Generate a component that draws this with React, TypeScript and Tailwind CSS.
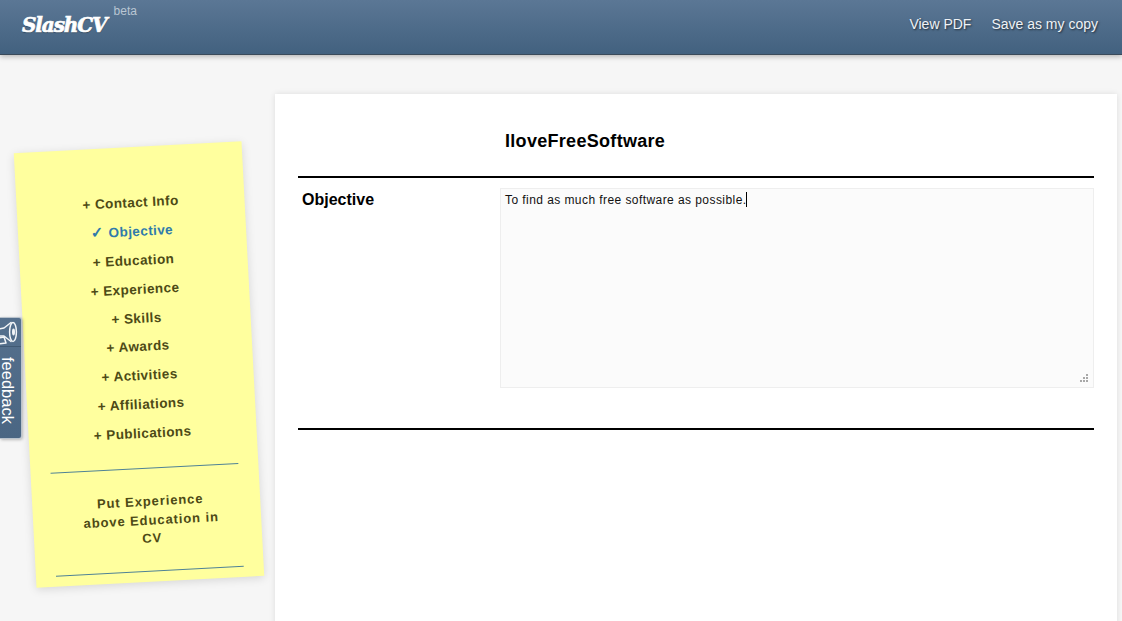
const items = ["Contact Info", "Objective", "Education", "Experience", "Skills", "Awards", "Activities", "Affiliations", "Publications"];

function Megaphone() {
  return (
    <svg width="20" height="28" viewBox="0 0 20 28" fill="none" stroke="#f2f5f8" strokeWidth="1.5" strokeLinejoin="round" strokeLinecap="round" className="shrink-0">
      <path d="M-1 11 L4 10 L11 4.5" />
      <path d="M-1 18 L4 18 L11 23.5" />
      <ellipse cx="13" cy="14" rx="3.4" ry="9.5" />
      <ellipse cx="13.5" cy="14" rx="1.5" ry="3.4" fill="#f2f5f8" stroke="none" />
      <path d="M-1 20 L4 19 L6 25 L-1 26" />
    </svg>
  );
}

function Grip() {
  const dots = [[9, 1], [6, 4], [9, 4], [3, 7], [6, 7], [9, 7]];
  return (
    <svg width="11" height="9" viewBox="0 0 11 9" className="absolute right-[5px] bottom-[5px]">
      {dots.map(([x, y]) => (
        <rect key={`${x}-${y}`} x={x} y={y} width="2" height="2" fill="#a8a8a8" />
      ))}
    </svg>
  );
}

export default function App() {
  return (
    <div className="relative h-screen overflow-hidden bg-[#f6f6f6] font-['Liberation_Sans',Arial,sans-serif]">
      <header className="relative z-10 flex h-[55px] items-start justify-between border-b border-b-[#3a4a5a] bg-gradient-to-b from-[#5b7795] to-[#42617f] shadow-[0_2px_5px_rgba(0,0,0,0.25)]">
        <div className="flex items-start pl-[22px]">
          <span className="mt-[11px] font-['DejaVu_Serif',serif] text-[20px] leading-[28px] font-bold tracking-[-1.1px] text-white italic [-webkit-text-stroke:0.7px_white] [text-shadow:0_1px_1px_rgba(0,0,0,0.4)]">SlashCV</span>
          <span className="mt-[4px] ml-[7px] text-[12px] leading-[15px] text-[#b9c6d3]">beta</span>
        </div>
        <nav className="flex gap-5 pt-[16px] pr-[24px] text-[14px] leading-[17px] text-[#eef2f6] [text-shadow:1px_1px_2px_rgba(0,0,0,0.6)]">
          <a>View PDF</a>
          <a>Save as my copy</a>
        </nav>
      </header>

      <div className="absolute top-[317px] left-0 z-20 flex h-[122px] w-[22px] flex-col overflow-hidden rounded-r-[3px] border border-l-0 border-[#b8c2cc] bg-gradient-to-b from-[#55708d] to-[#4a6683] shadow-[1px_1px_3px_rgba(0,0,0,0.25)]">
        <div className="flex h-[29px] shrink-0 overflow-hidden border-b border-b-[#415a74]">
          <Megaphone />
        </div>
        <div className="flex flex-1 justify-start pt-[10px]">
          <span className="text-[16.5px] leading-[15px] text-white [writing-mode:vertical-rl]">feedback</span>
        </div>
      </div>

      <main className="flex">
        <aside className="w-[275px] shrink-0 pt-[92px] pl-[25px]">
          <div className="h-[435px] w-[228px] -rotate-3 bg-[#ffff9e] pt-[42px] text-center text-[13.5px] font-bold tracking-[0.42px] text-[#4d4a16] shadow-[0_2px_10px_rgba(0,0,0,0.13)]">
            <ul>
              {items.map((item) => (
                <li key={item} className={item === "Objective" ? "h-[28.9px] leading-[28.9px] text-[#2f7bab]" : "h-[28.9px] leading-[28.9px]"}>
                  {item === "Objective" ? <span className="text-[15px] leading-none">✓</span> : "+"} {item}
                </li>
              ))}
            </ul>
            <div className="mx-auto mt-[19px] h-px w-[188px] bg-[#4f8296]" />
            <p className="mx-auto mt-[24px] w-[158px] pl-[8px] text-[13px] leading-[18.5px] tracking-[0.9px]">Put Experience above Education in CV</p>
            <div className="mx-auto mt-[22px] h-px w-[188px] bg-[#4f8296]" />
          </div>
        </aside>

        <section className="mt-[39px] h-[600px] w-[842px] bg-white px-[23px] pt-[35px] shadow-[0_0_6px_rgba(0,0,0,0.1)]">
          <h1 className="pl-[207px] text-[18px] leading-[24px] font-bold tracking-[0.3px] text-black">IloveFreeSoftware</h1>
          <div className="mt-[23px] flex border-y-2 border-black pt-[10px] pb-[40px]">
            <h2 className="w-[202px] shrink-0 pt-[3px] pl-[4px] text-[16px] leading-[18px] font-bold text-black">Objective</h2>
            <div className="relative h-[200px] flex-1 border border-[#eeeeee] bg-[#fbfbfb] px-[4px] text-[12px] leading-[20px] tracking-[0.43px] text-[#111]">
              To find as much free software as possible.<span className="ml-[-1px] inline-block h-[15px] w-px translate-y-[3px] bg-black" />
              <Grip />
            </div>
          </div>
        </section>
      </main>
    </div>
  );
}
